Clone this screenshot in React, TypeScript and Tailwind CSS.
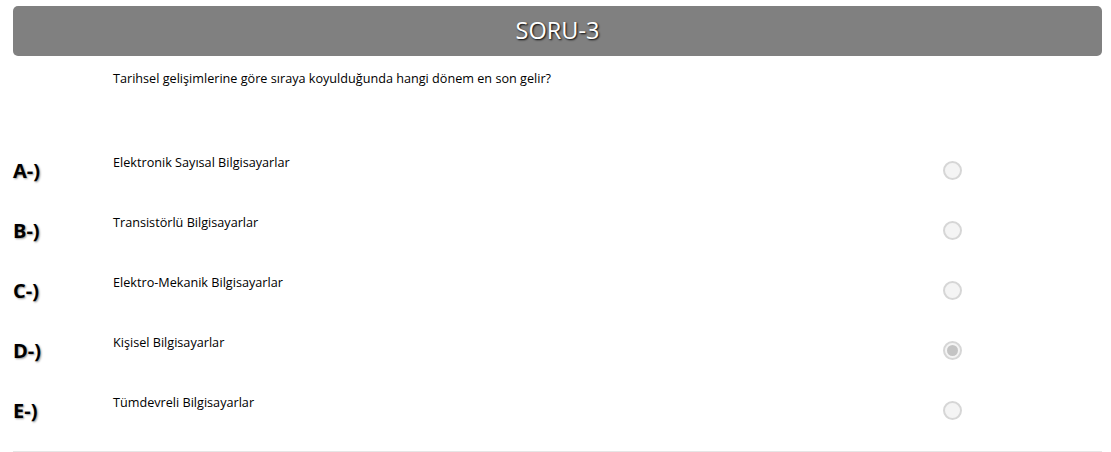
import React from "react";

const options = [
  { label: "A-)", text: "Elektronik Sayısal Bilgisayarlar", checked: false },
  { label: "B-)", text: "Transistörlü Bilgisayarlar", checked: false },
  { label: "C-)", text: "Elektro-Mekanik Bilgisayarlar", checked: false },
  { label: "D-)", text: "Kişisel Bilgisayarlar", checked: true },
  { label: "E-)", text: "Tümdevreli Bilgisayarlar", checked: false },
];

export default function App() {
  return (
    <div
      className="w-[1111px] h-[452px] bg-white overflow-hidden"
      style={{ fontFamily: '"Open Sans", "Noto Sans", sans-serif' }}
    >
      <div className="ml-[13px] w-[1089px] pt-[6px]">
        <div className="h-[50px] bg-[#808080] rounded-[5px] flex items-center justify-center">
          <span className="text-white text-[23.5px] leading-none [text-shadow:1px_1px_2px_#000]">
            SORU-3
          </span>
        </div>
        <div className="pl-[100px] pt-[14px] h-[84px] text-[12.65px] leading-[16px] text-black">
          Tarihsel gelişimlerine göre sıraya koyulduğunda hangi dönem en son gelir?
        </div>
        {options.map((o) => (
          <div key={o.label} className="h-[60px] flex">
            <div className="w-[100px] flex items-center pt-[2px]">
              <span className="text-[20px] font-bold text-black [text-shadow:1px_1px_2px_rgba(0,0,0,0.4)]">
                {o.label}
              </span>
            </div>
            <div className="w-[830px] pt-[14px] text-[12.65px] leading-[16px] text-black">
              {o.text}
            </div>
            <div className="flex-1 flex items-center">
              <div className="w-[19px] h-[19px] rounded-full border-2 border-[#d6d6d6] bg-[#f4f4f4] flex items-center justify-center">
                {o.checked && <div className="w-[11px] h-[11px] rounded-full bg-[#c4c4c4]" />}
              </div>
            </div>
          </div>
        ))}
        <div className="mt-[11px] border-t border-[#e6e6e6]" />
      </div>
    </div>
  );
}
